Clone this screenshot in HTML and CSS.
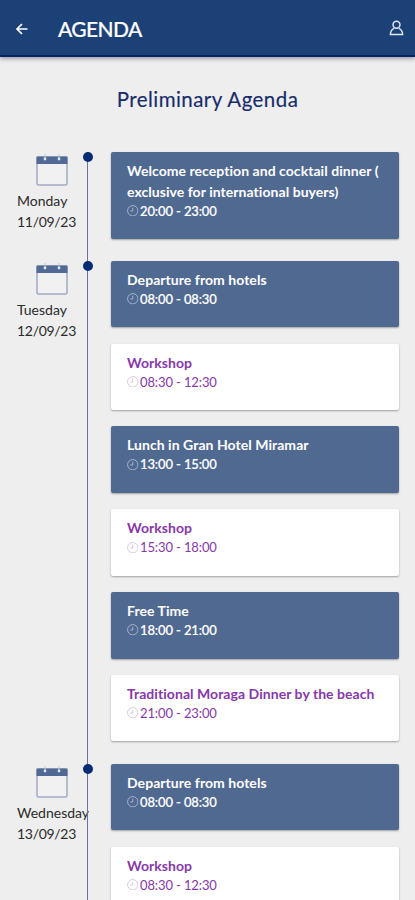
FILE: index.html
```html
<!DOCTYPE html>
<html lang="en">
<head>
<meta charset="utf-8">
<title>Agenda</title>
<link rel="stylesheet" href="styles.css">
</head>
<body>
<svg class="defs" aria-hidden="true">
  <symbol id="clock" viewBox="0 0 12 12"><circle cx="6" cy="6" r="5.4"/><path d="M6 2.8V6.3H3.4"/></symbol>
  <symbol id="calendar" viewBox="0 0 32 32"><rect class="cal-page" x="1" y="3" width="30" height="28" rx="1"/><path class="cal-head" d="M.5 2.5h31V10H.5z"/><path class="cal-ring" d="M9 0v5M23 0v5"/><circle class="cal-hole" cx="9" cy="5" r="1.4"/><circle class="cal-hole" cx="23" cy="5" r="1.4"/></symbol>
</svg>
<header class="bar">
  <svg class="back" viewBox="0 0 14 14"><path d="M12.5 7H2M7 2L2 7L7 12"/></svg>
  <h1 class="bar-title">AGENDA</h1>
  <svg class="user" viewBox="0 0 16 17"><circle cx="8" cy="5" r="3.7"/><path d="M5.6 8.9C3.2 9.8 1.6 12 1.5 15.4h13C14.4 12 12.8 9.8 10.4 8.9"/></svg>
</header>
<main>
  <h2 class="heading">Preliminary Agenda</h2>
  <section class="day">
    <div class="date"><svg class="calendar"><use href="#calendar"/></svg><p>Monday</p><p class="number">11/09/23</p></div>
    <div class="events">
      <article class="card filled"><h3>Welcome reception and cocktail dinner ( exclusive for international buyers)</h3><p><svg class="clock"><use href="#clock"/></svg>20:00 - 23:00</p></article>
    </div>
  </section>
  <section class="day">
    <div class="date"><svg class="calendar"><use href="#calendar"/></svg><p>Tuesday</p><p class="number">12/09/23</p></div>
    <div class="events">
      <article class="card filled"><h3>Departure from hotels</h3><p><svg class="clock"><use href="#clock"/></svg>08:00 - 08:30</p></article>
      <article class="card"><h3>Workshop</h3><p><svg class="clock"><use href="#clock"/></svg>08:30 - 12:30</p></article>
      <article class="card filled"><h3>Lunch in Gran Hotel Miramar</h3><p><svg class="clock"><use href="#clock"/></svg>13:00 - 15:00</p></article>
      <article class="card"><h3>Workshop</h3><p><svg class="clock"><use href="#clock"/></svg>15:30 - 18:00</p></article>
      <article class="card filled"><h3>Free Time</h3><p><svg class="clock"><use href="#clock"/></svg>18:00 - 21:00</p></article>
      <article class="card"><h3>Traditional Moraga Dinner by the beach</h3><p><svg class="clock"><use href="#clock"/></svg>21:00 - 23:00</p></article>
    </div>
  </section>
  <section class="day">
    <div class="date"><svg class="calendar"><use href="#calendar"/></svg><p>Wednesday</p><p class="number">13/09/23</p></div>
    <div class="events">
      <article class="card filled"><h3>Departure from hotels</h3><p><svg class="clock"><use href="#clock"/></svg>08:00 - 08:30</p></article>
      <article class="card"><h3>Workshop</h3><p><svg class="clock"><use href="#clock"/></svg>08:30 - 12:30</p></article>
    </div>
  </section>
</main>
</body>
</html>
```
FILE: styles.css
```css
* { box-sizing: border-box; }
html, body { height: 900px; overflow: hidden; }
body { margin: 0; background: #eee; font-family: Lato, "Liberation Sans", sans-serif; color: #2b2b2b; }
h1, h2, h3, p { margin: 0; }
svg { fill: none; }
.defs { position: absolute; width: 0; height: 0; }
.bar { height: 57px; padding: 1px 11px 0 15px; display: flex; align-items: center; background: #1b4176; border-bottom: 2px solid #072466; box-shadow: 0 2px 4px rgba(60, 40, 60, .4); }
.back { width: 14px; height: 14px; margin-top: 1px; stroke: #fff; stroke-width: 1.7; }
.bar-title { margin-left: 29px; padding-top: 1px; flex: 1; font-size: 21px; font-weight: 500; letter-spacing: -.6px; color: #fff; -webkit-text-stroke: .2px #fff; }
.user { width: 15px; height: 16px; stroke: #e0e5f3; stroke-width: 1.6; }
.heading { height: 94.5px; padding-top: 29px; text-align: center; font-size: 20.5px; line-height: 27px; font-weight: 400; letter-spacing: .45px; color: #172c6b; -webkit-text-stroke: .15px #172c6b; }
.day { display: flex; }
.date { width: 87px; padding: 2px 0 0 17px; font-size: 14px; line-height: 21px; white-space: nowrap; }
.number { letter-spacing: -.3px; }
.calendar { display: block; width: 32px; height: 32px; margin: 0 0 4px 19px; }
.cal-page { stroke: #7b86ad; stroke-width: 1; fill: #f1f1f2; }
.cal-head { fill: #506a95; }
.cal-ring { stroke: #b9c5d8; stroke-width: 1; }
.cal-hole { fill: #dfe6ef; }
.events { position: relative; width: 311.5px; padding: 0 0 22.4px 22.5px; border-left: 1px solid #69739e; display: flex; flex-direction: column; gap: 16.3px; }
.events::before { content: ""; position: absolute; left: -5.5px; top: .5px; width: 10px; height: 10px; border-radius: 50%; background: #082c74; }
.card { height: 66.5px; padding: 8px 15.5px 0 16.5px; border-radius: 2px; background: #fff; color: #8738a9; box-shadow: 0 1px 2px rgba(0, 0, 0, .33); }
.card h3 { font-size: 14px; line-height: 21px; font-weight: 700; letter-spacing: .05px; }
.card p { display: flex; align-items: center; gap: 1.5px; font-size: 13px; line-height: 18px; letter-spacing: -.12px; }
.clock { width: 11.5px; height: 11.5px; stroke: #c9b8d3; stroke-width: .8; }
.filled { background: #506991; color: #fff; }
.filled .clock { stroke: #bdc9dd; }
.filled p { font-weight: 500; -webkit-text-stroke: .2px #fff; }
.day:first-of-type .card { height: 87px; }
```
